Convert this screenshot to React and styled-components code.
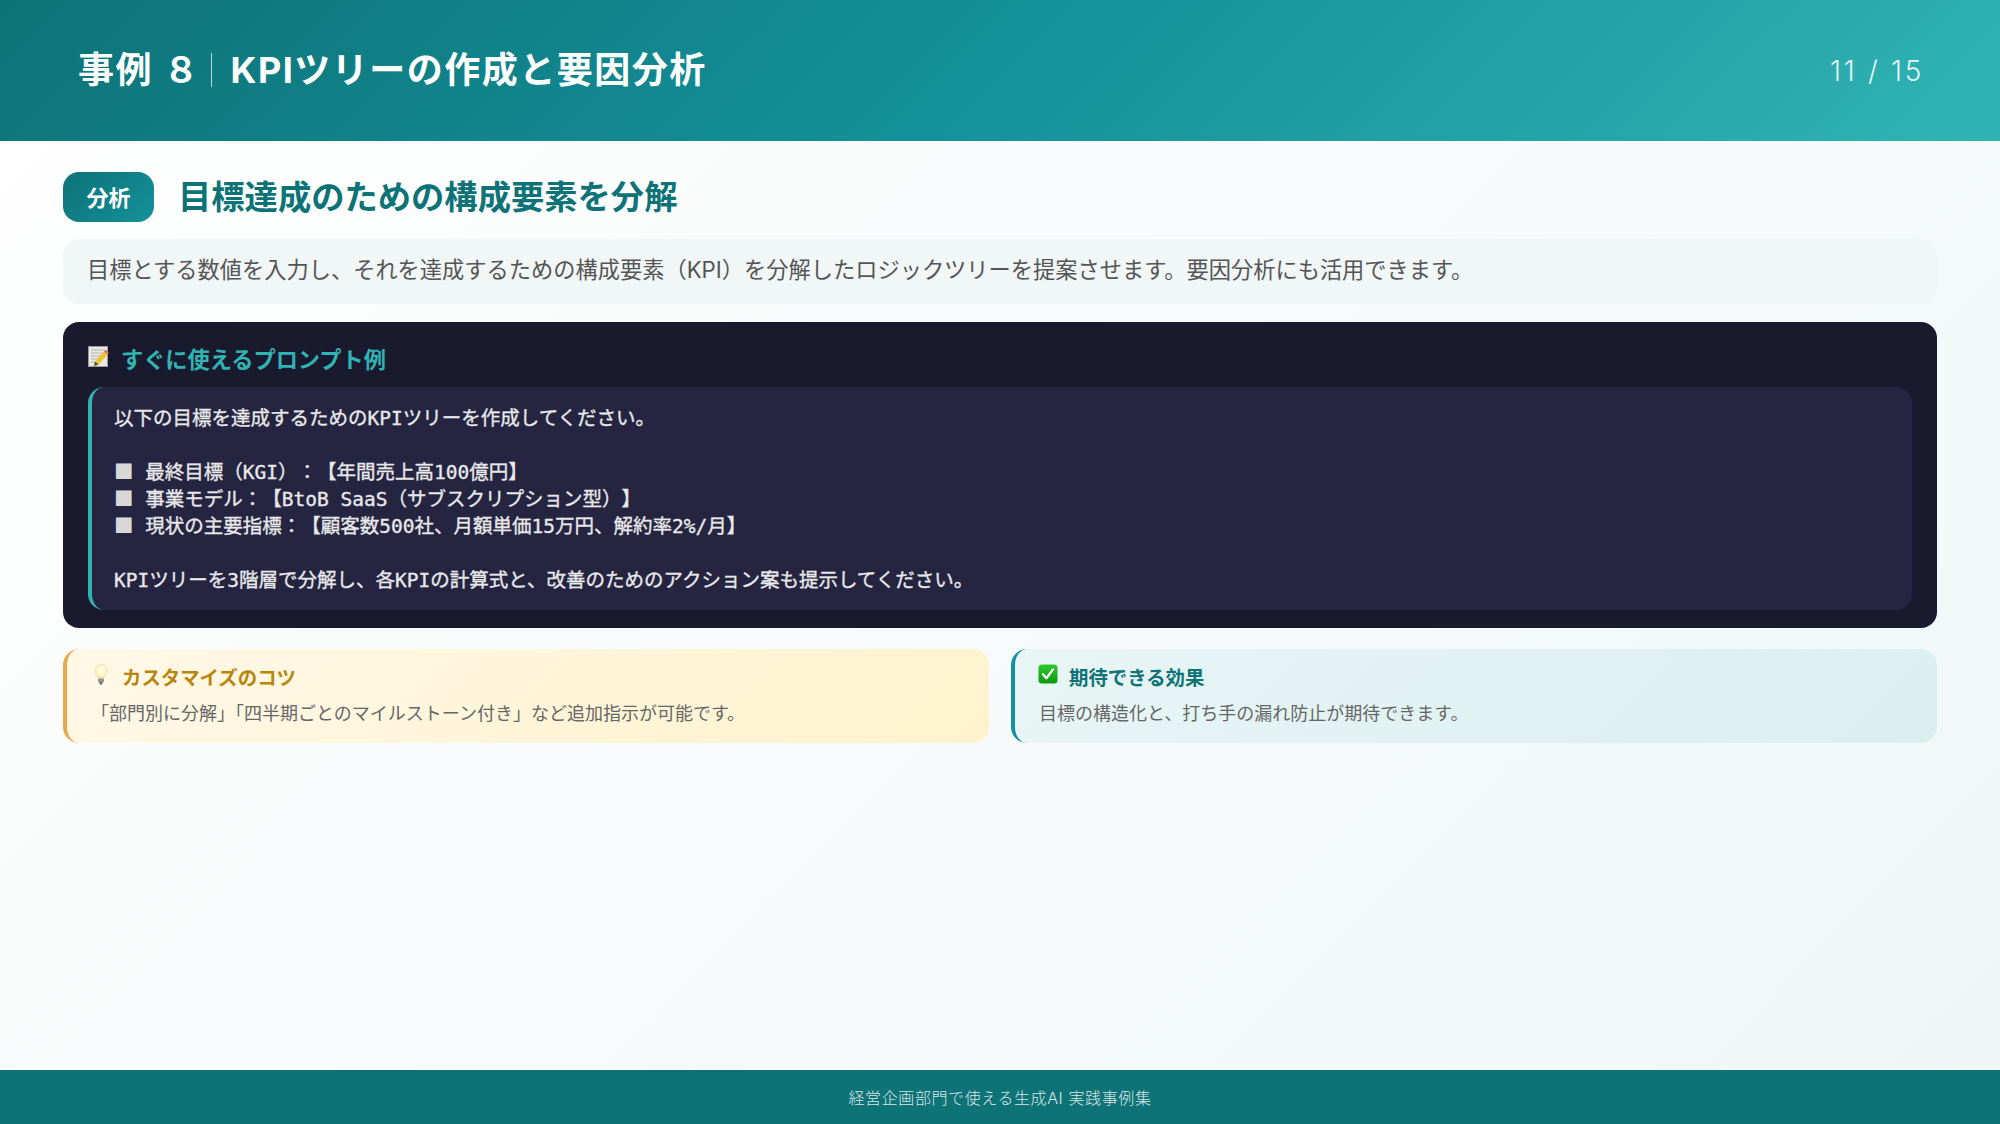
import React from 'react';
import styled, { createGlobalStyle } from 'styled-components';

const JP = '"Inter", "Noto Sans CJK JP", sans-serif';
const CJK = '"Noto Sans CJK JP", sans-serif';
const MONO = '"DejaVu Sans Mono", "Noto Sans CJK JP", monospace';

const Global = createGlobalStyle`
    * { box-sizing: border-box; }
    html, body { margin: 0; padding: 0; }
    body { font-family: ${JP}; }
`;

const MemoIcon = () => (
    <svg width="21" height="21" viewBox="0 0 21 21">
        <rect x="0.5" y="0.5" width="19" height="20" fill="#e9e9e6" stroke="#9a9a9a" strokeWidth="1" />
        <path d="M3 4h14M3 7h14M3 10h10M3 13h7M3 16h5" stroke="#b4b4b4" strokeWidth="1" />
        <path d="M7 15.5L16 5.5l3.5 3L10.5 18.5l-4.5 1.5z" fill="#f2c230" />
        <path d="M16 5.5l1.6-1.8 3.2 2.9-1.3 1.9z" fill="#e0736a" />
        <path d="M7 15.5l3.5 3-4.5 1.5z" fill="#5a4a2a" />
    </svg>
);

const BulbIcon = () => (
    <svg width="14" height="21" viewBox="0 0 14 21">
        <defs>
            <radialGradient id="bulb" cx="50%" cy="40%" r="60%">
                <stop offset="0%" stopColor="#fffef6" />
                <stop offset="65%" stopColor="#fdf6c4" />
                <stop offset="100%" stopColor="#ece09a" />
            </radialGradient>
        </defs>
        <path d="M7 0.6c3.6 0 6.2 2.6 6.2 6 0 2.4-1.4 3.8-2.3 5.2-.5.8-.7 1.6-.8 2.4H3.9c-.1-.8-.3-1.6-.8-2.4C2.2 10.4.8 9 .8 6.6.8 3.2 3.4.6 7 .6z" fill="url(#bulb)" stroke="#ebdfa6" strokeWidth="0.6" />
        <rect x="4" y="14.4" width="6" height="3.8" rx="1" fill="#8f9499" />
        <path d="M5.2 18.2h3.6L8 20.4H6z" fill="#55595e" />
    </svg>
);

const CheckIcon = () => (
    <svg width="20" height="20" viewBox="0 0 20 20">
        <defs>
            <linearGradient id="chk" x1="0" y1="0" x2="0" y2="1">
                <stop offset="0%" stopColor="#2fc62f" />
                <stop offset="100%" stopColor="#0b9a12" />
            </linearGradient>
        </defs>
        <rect x="0.5" y="0.5" width="19" height="19" rx="3.5" fill="url(#chk)" />
        <path d="M5 10.2l3.4 4L15 5.4" fill="none" stroke="#fff" strokeWidth="2.4" strokeLinecap="round" strokeLinejoin="round" />
    </svg>
);

export default function App() {
    return (
        <Page>
            <Global />
            <Header>
                <Title>事例 ８<Divider />KPIツリーの作成と要因分析</Title>
                <PageNum>11 / 15</PageNum>
            </Header>
            <Main>
                <SectionRow>
                    <Badge>分析</Badge>
                    <SectionTitle>目標達成のための構成要素を分解</SectionTitle>
                </SectionRow>
                <Desc>目標とする数値を入力し、それを達成するための構成要素（KPI）を分解したロジックツリーを提案させます。要因分析にも活用できます。</Desc>
                <PromptCard>
                    <PromptHead><MemoIcon /><PromptLabel>すぐに使えるプロンプト例</PromptLabel></PromptHead>
                    <PromptBody>
                        {'以下の目標を達成するためのKPIツリーを作成してください。\n\n'}
                        <Square>■</Square>{' 最終目標（KGI）：【年間売上高100億円】\n'}
                        <Square>■</Square>{' 事業モデル：【BtoB SaaS（サブスクリプション型）】\n'}
                        <Square>■</Square>{' 現状の主要指標：【顧客数500社、月額単価15万円、解約率2%/月】\n\n'}
                        {'KPIツリーを3階層で分解し、各KPIの計算式と、改善のためのアクション案も提示してください。'}
                    </PromptBody>
                </PromptCard>
                <Cards>
                    <InfoCard $tone="tip">
                        <InfoHead>
                            <IconSlot $tone="tip"><BulbIcon /></IconSlot>
                            <InfoTitle $tone="tip">カスタマイズのコツ</InfoTitle>
                        </InfoHead>
                        <InfoText>「部門別に分解」「四半期ごとのマイルストーン付き」など追加指示が可能です。</InfoText>
                    </InfoCard>
                    <InfoCard $tone="effect">
                        <InfoHead>
                            <IconSlot $tone="effect"><CheckIcon /></IconSlot>
                            <InfoTitle $tone="effect">期待できる効果</InfoTitle>
                        </InfoHead>
                        <InfoText>目標の構造化と、打ち手の漏れ防止が期待できます。</InfoText>
                    </InfoCard>
                </Cards>
            </Main>
            <Footer>経営企画部門で使える生成AI 実践事例集</Footer>
        </Page>
    );
}

const Page = styled.div`
    width: 2000px;
    height: 1124px;
    display: flex;
    flex-direction: column;
    overflow: hidden;
    background: linear-gradient(135deg, #ffffff 0%, #f0f6f7 100%);
`;

const Header = styled.header`
    height: 141px;
    flex: none;
    padding: 0 76px 2px 78px;
    display: flex;
    align-items: center;
    justify-content: space-between;
    background: linear-gradient(135deg, #0d7377 0%, #14919b 50%, #32b3b3 100%);
    color: #fff;
`;

const Title = styled.h1`
    margin: 0;
    font-size: 36px;
    font-weight: 700;
    line-height: 48px;
    letter-spacing: 1.5px;
    display: flex;
    align-items: center;
    white-space: pre;
`;

const Divider = styled.span`
    width: 1px;
    height: 34px;
    margin: 0 19px 0 10px;
    background: rgba(255, 255, 255, 0.7);
`;

const PageNum = styled.div`
    font-size: 28px;
    font-weight: 300;
    letter-spacing: 2.7px;
    padding-top: 2px;
    color: rgba(255, 255, 255, 0.9);
`;

const Main = styled.main`
    flex: 1;
    padding: 31px 63px 0;
    display: flex;
    flex-direction: column;
`;

const SectionRow = styled.div`
    display: flex;
    align-items: center;
    gap: 24px;
    height: 50px;
`;

const Badge = styled.div`
    width: 91px;
    height: 50px;
    padding-bottom: 2px;
    border-radius: 16px;
    background: linear-gradient(135deg, #0d7377, #14919b);
    color: #fff;
    font-size: 22px;
    font-weight: 700;
    display: flex;
    align-items: center;
    justify-content: center;
`;

const SectionTitle = styled.h2`
    margin: 0 0 5px;
    font-size: 33.3px;
    font-weight: 700;
    color: #0d7377;
`;

const Desc = styled.div`
    margin-top: 17px;
    height: 65px;
    padding: 0 24px 7px;
    display: flex;
    align-items: center;
    border-radius: 16px;
    background: #f1f6f7;
    font-size: 22.24px;
    color: #555;
`;

const PromptCard = styled.section`
    margin-top: 18px;
    height: 306px;
    padding: 22px 25px 18px;
    border-radius: 16px;
    background: #1a1a2e;
    display: flex;
    flex-direction: column;
`;

const PromptHead = styled.div`
    height: 43px;
    display: flex;
    align-items: flex-start;
    gap: 12px;
    svg { margin-top: 2px; }
`;

const PromptLabel = styled.span`
    font-size: 22.2px;
    line-height: 32px;
    font-weight: 700;
    color: #32b3b3;
`;

const PromptBody = styled.pre`
    margin: 0;
    flex: 1;
    padding: 18px 22px 0;
    border-left: 4px solid #32b3b3;
    border-radius: 16px;
    background: #252542;
    color: #e8e8e8;
    font-family: ${MONO};
    font-size: 19.5px;
    font-weight: 400;
    -webkit-text-stroke: 0.35px #e8e8e8;
    line-height: 27px;
    white-space: pre-wrap;
    text-spacing-trim: space-all;
`;

const Square = styled.span`
    font-family: ${CJK};
    font-weight: 400;
    line-height: 0;
    color: #d8d8d8;
    -webkit-text-stroke: 0;
`;

const Cards = styled.div`
    margin-top: 21px;
    display: grid;
    grid-template-columns: 1fr 1fr;
    gap: 22px;
`;

const InfoCard = styled.div`
    height: 94px;
    padding: 12px 24px;
    border-radius: 16px;
    border-left: 4px solid ${p => (p.$tone === 'tip' ? '#e8a84c' : '#14919b')};
    background: ${p => (p.$tone === 'tip'
        ? 'linear-gradient(135deg, #fff8e7, #fef3cd)'
        : 'linear-gradient(135deg, #e8f5f5, #d9efee)')};
`;

const InfoHead = styled.div`
    display: flex;
    align-items: center;
    gap: 11px;
    height: 30px;
`;

const IconSlot = styled.span`
    width: ${p => (p.$tone === 'tip' ? '21px' : '20px')};
    margin-top: ${p => (p.$tone === 'tip' ? '-4px' : '-5px')};
    margin-left: -1px;
    display: flex;
    justify-content: center;
`;

const InfoTitle = styled.span`
    font-size: 19.4px;
    font-weight: 700;
    color: ${p => (p.$tone === 'tip' ? '#b8860b' : '#0d7377')};
`;

const InfoText = styled.p`
    margin: 9px 0 0;
    font-size: 18px;
    line-height: 28px;
    color: #666;
`;

const Footer = styled.footer`
    height: 54px;
    flex: none;
    display: flex;
    align-items: center;
    justify-content: center;
    background: #0d7377;
    color: rgba(255, 255, 255, 0.85);
    font-size: 16px;
    font-weight: 300;
    letter-spacing: 0.6px;
`;
